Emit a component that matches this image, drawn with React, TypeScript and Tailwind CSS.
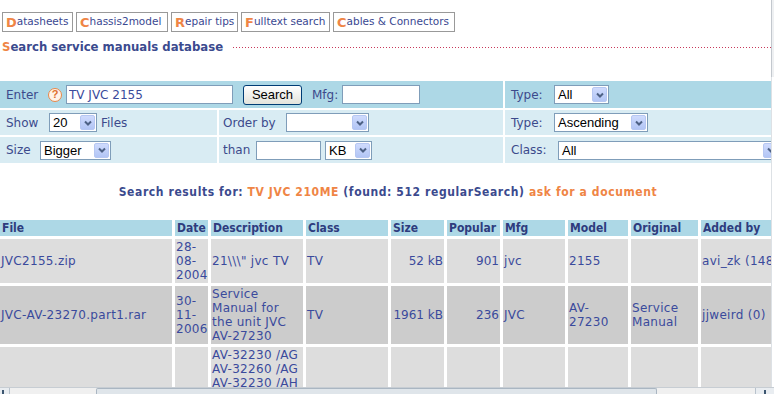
import { clsx } from 'clsx'

function Chevron() {
  return (
    <svg width="8" height="6" viewBox="0 0 8 6">
      <path d="M1 1.5 L4 4.5 L7 1.5" fill="none" stroke="#4d6185" strokeWidth="2" />
    </svg>
  )
}

function Select({ value, className }: { value: string; className: string }) {
  return (
    <div className={clsx('flex h-[19px] shrink-0 items-stretch border border-[#7f9db9] bg-white', className)}>
      <span className="flex-1 overflow-hidden whitespace-nowrap pl-[3px] font-['Liberation_Sans',sans-serif] text-[13px] leading-[17px] text-black">
        {value}
      </span>
      <span className="m-px flex w-[15px] items-center justify-center rounded-[2px] border border-[#b6c7f2] bg-gradient-to-b from-[#cfdbfd] to-[#b2c5f5]">
        <Chevron />
      </span>
    </div>
  )
}

function TextInput({ value, className }: { value?: string; className: string }) {
  return (
    <input
      readOnly
      defaultValue={value}
      className={clsx('h-[19px] shrink-0 border border-[#7f9db9] bg-white px-[2px] text-[12px] text-[#3a4a9c] outline-none', className)}
    />
  )
}

const navItems = [
  { first: 'D', rest: 'atasheets', w: 'w-[71px]' },
  { first: 'C', rest: 'hassis2model', w: 'w-[92px]' },
  { first: 'R', rest: 'epair tips', w: 'w-[67px]' },
  { first: 'F', rest: 'ulltext search', w: 'w-[89px]' },
  { first: 'C', rest: 'ables & Connectors', w: 'w-[122px]' },
]

const cols = [
  { label: 'File', w: 'w-[172px]' },
  { label: 'Date', w: 'w-[33px]' },
  { label: 'Description', w: 'w-[92px]' },
  { label: 'Class', w: 'w-[82px]' },
  { label: 'Size', w: 'w-[53px]' },
  { label: 'Popular', w: 'w-[53px]' },
  { label: 'Mfg', w: 'w-[62px]' },
  { label: 'Model', w: 'w-[60px]' },
  { label: 'Original', w: 'w-[67px]' },
  { label: 'Added by', w: 'w-[110px]' },
]

const rows = [
  {
    bg: 'bg-[#dddddd]',
    cells: ['JVC2155.zip', '28-08-2004', '21\\\\\\" jvc TV', 'TV', '52 kB', '901', 'jvc', '2155', '', 'avi_zk (148)'],
  },
  {
    bg: 'bg-[#cccccc]',
    cells: ['JVC-AV-23270.part1.rar', '30-11-2006', 'Service Manual for the unit JVC AV-27230', 'TV', '1961 kB', '236', 'JVC', 'AV-27230', 'Service Manual', 'jjweird (0)'],
  },
  {
    bg: 'bg-[#dddddd]',
    cells: ['', '', 'AV-32230 /AG AV-32260 /AG AV-32230 /AH AV-32260 /AH AV-36230 /AG', '', '', '', '', '', '', ''],
  },
]

export default function App() {
  const label = 'shrink-0 text-[12px] text-[#3c4a8c]'
  return (
    <div className="flex h-[394px] w-[774px] flex-col overflow-hidden bg-white font-['DejaVu_Sans',sans-serif]">
      <div className="flex h-[387px]">
        <div className="w-[771px] shrink-0 overflow-hidden">
          {/* top links */}
          <div className="flex gap-[3px] pl-[2px] pt-3">
            {navItems.map((n, i) => (
              <div
                key={i}
                className={clsx('flex h-5 shrink-0 items-center whitespace-nowrap border border-[#999999] px-[3px] text-[10.5px] text-[#3a4891]', n.w)}
              >
                <span className="text-[13px] font-bold leading-none text-[#ef8545]">{n.first}</span>
                {n.rest}
              </div>
            ))}
          </div>

          {/* heading */}
          <div className="mt-[7px] flex h-4 items-center pl-[2px]">
            <h1 className="shrink-0 font-['DejaVu_Sans_Condensed','DejaVu_Sans',sans-serif] text-[13px] font-bold text-[#3b4a8e]">
              <span className="text-[#ef8545]">S</span>earch service manuals database
            </h1>
            <div className="ml-[10px] h-px flex-1 bg-[repeating-linear-gradient(90deg,#c8385a_0_1px,transparent_1px_3px)]" />
          </div>

          {/* search form */}
          <div className="mt-[24px] grid grid-cols-[217px_284px_1fr] gap-[2px] pt-[2px]">
            <div className="col-span-2 flex h-[27px] items-center bg-[#add8e6] pl-[6px]">
              <span className={clsx(label, 'w-[42px]')}>Enter</span>
              <span className="flex h-[14px] w-[14px] shrink-0 items-center justify-center rounded-full border border-[#e8884a] bg-[#fff3e8] font-['Liberation_Sans',sans-serif] text-[11px] font-bold leading-none text-[#e07030]">
                ?
              </span>
              <TextInput value="TV JVC 2155" className="ml-[4px] w-[167px]" />
              <button className="ml-[10px] h-[20px] w-[59px] shrink-0 rounded-[3px] border border-[#003c74] bg-gradient-to-b from-white to-[#e3e3db] font-['Liberation_Sans',sans-serif] text-[13px] leading-none text-black">
                Search
              </button>
              <span className={clsx(label, 'ml-[10px] w-[30px]')}>Mfg:</span>
              <TextInput className="w-[78px]" />
            </div>
            <div className="flex h-[27px] items-center bg-[#add8e6] pl-[6px]">
              <span className={clsx(label, 'w-[43px]')}>Type:</span>
              <Select value="All" className="w-[55px]" />
            </div>

            <div className="flex h-[25px] items-center bg-[#d9ecf3] pl-[6px]">
              <span className={clsx(label, 'w-[43px]')}>Show</span>
              <Select value="20" className="w-[48px]" />
              <span className={clsx(label, 'ml-[4px]')}>Files</span>
            </div>
            <div className="flex h-[25px] items-center bg-[#d9ecf3] pl-[4px]">
              <span className={clsx(label, 'w-[63px]')}>Order by</span>
              <Select value="" className="w-[83px]" />
            </div>
            <div className="flex h-[25px] items-center bg-[#d9ecf3] pl-[6px]">
              <span className={clsx(label, 'w-[43px]')}>Type:</span>
              <Select value="Ascending" className="w-[94px]" />
            </div>

            <div className="flex h-[26px] items-center bg-[#d9ecf3] pl-[6px]">
              <span className={clsx(label, 'w-[34px]')}>Size</span>
              <Select value="Bigger" className="w-[71px]" />
            </div>
            <div className="flex h-[26px] items-center bg-[#d9ecf3] pl-[4px]">
              <span className={clsx(label, 'w-[33px]')}>than</span>
              <TextInput className="w-[65px]" />
              <Select value="KB" className="ml-[4px] w-[47px]" />
            </div>
            <div className="flex h-[26px] items-center bg-[#d9ecf3] pl-[6px]">
              <span className={clsx(label, 'w-[47px]')}>Class:</span>
              <Select value="All" className="w-[222px]" />
            </div>
          </div>

          {/* results summary */}
          <p className="mt-[21px] h-4 pl-[5px] text-center font-['DejaVu_Sans_Condensed','DejaVu_Sans',sans-serif] text-[12px] font-bold leading-4 tracking-[0.6px] text-[#3b4a8e]">
            Search results for: <span className="text-[#ef8545]">TV JVC 210ME</span> (found: 512 regularSearch){' '}
            <span className="text-[#ef8545]">ask for a document</span>
          </p>

          {/* results */}
          <table className="mt-[17px] -ml-[3px] w-[817px] table-fixed border-separate border-spacing-[3px]">
            <colgroup>
              {cols.map(c => (
                <col key={c.label} className={c.w} />
              ))}
            </colgroup>
            <thead>
              <tr>
                {cols.map(c => (
                  <th
                    key={c.label}
                    className="h-4 overflow-hidden whitespace-nowrap bg-[#add8e6] px-[2px] text-left font-['DejaVu_Sans_Condensed','DejaVu_Sans',sans-serif] text-[12px] font-bold leading-4 text-[#2e3c7e]"
                  >
                    {c.label}
                  </th>
                ))}
              </tr>
            </thead>
            <tbody>
              {rows.map((r, ri) => (
                <tr key={ri}>
                  {r.cells.map((cell, ci) => (
                    <td
                      key={ci}
                      className={clsx(
                        'overflow-hidden py-px align-middle text-[12px] leading-[14px] text-[#3a4a9c]',
                        r.bg,
                        ci === 4 || ci === 5 ? 'whitespace-nowrap pl-0 pr-px text-right' : 'px-px tracking-[0.3px]',
                        ci === 9 && 'whitespace-nowrap',
                      )}
                    >
                      {cell}
                    </td>
                  ))}
                </tr>
              ))}
            </tbody>
          </table>
        </div>

        {/* vertical scrollbar edge */}
        <div className="flex w-[3px] flex-col">
          <div className="h-[77px] border-l border-[#c3c8ce] bg-[#eef0f2]" />
          <div className="flex-1 border-l border-[#dde1e5] bg-white" />
        </div>
      </div>

      {/* horizontal scrollbar */}
      <div className="flex h-[7px] border-t border-[#c7cdd3] bg-[#f0f0f0]">
        <div className="flex w-[10px] items-start border-r border-[#b8c2cc] bg-[#e9edf1] pl-[2px] pt-[2px]">
          <div className="h-[4px] w-[2px] bg-[#3c5670]" />
        </div>
        <div className="w-[86px]" />
        <div className="w-[561px] rounded-t-[2px] border border-b-0 border-[#aab6c2] bg-[#dfe5ea]" />
        <div className="flex-1" />
        <div className="flex w-[19px] items-start justify-center border-l border-[#b8c2cc] bg-[#e9edf1] pt-[2px]">
          <div className="h-[4px] w-[2px] bg-[#3c5670]" />
        </div>
      </div>
    </div>
  )
}
